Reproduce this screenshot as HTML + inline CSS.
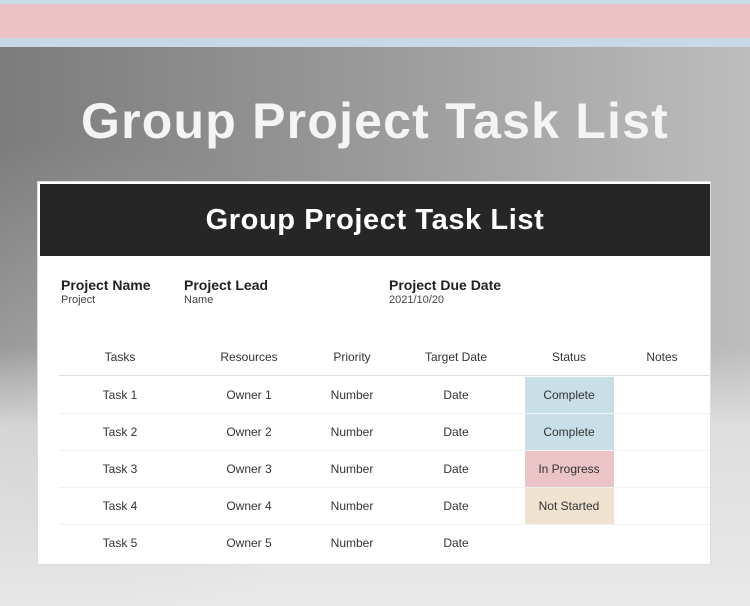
<!DOCTYPE html>
<html><head><style>
*{margin:0;padding:0;box-sizing:border-box}
html,body{width:750px;height:606px;overflow:hidden}
body{position:relative;font-family:"Liberation Sans",sans-serif;background:#e6e6e6}
.top{position:absolute;left:0;top:0;width:750px;height:47px;background:#c5dde6}
.pink{position:absolute;left:0;top:4px;width:750px;height:34px;background:#ebc3c6}
.band2{position:absolute;left:0;top:38px;width:750px;height:9px;background:#c8d8e6}
.bg{position:absolute;left:0;top:47px;width:750px;height:559px;background:linear-gradient(180deg,rgba(0,0,0,0) 0,rgba(0,0,0,0) 300px,#dedede 380px,#e9e9e9 100%),linear-gradient(90deg,#7c7c7c,#9a9a9a 50%,#bdbdbd);overflow:hidden}
.wave{position:absolute;left:-300px;top:90px;width:700px;height:500px;border-radius:50%;background:radial-gradient(ellipse at center,rgba(200,200,200,.5),rgba(170,170,170,0) 70%)}
h1{position:absolute;left:0;width:750px;top:92px;text-align:center;color:#f4f4f4;font-size:50px;font-weight:bold;font-family:"Liberation Sans",sans-serif;letter-spacing:1.2px}
.card{position:absolute;left:37px;top:181px;width:674px;height:384px;background:#fff;border:1px solid #ddd}
.hd{position:absolute;left:2px;top:2px;width:670px;height:72px;background:#262626;color:#fff;font-size:29px;font-weight:bold;text-align:center;line-height:72px;letter-spacing:0.6px}
.lab{position:absolute;font-size:14px;font-weight:bold;color:#222}
.val{position:absolute;font-size:11px;color:#444}
.c{position:absolute;font-size:12px;color:#333;text-align:center;width:100px;margin-left:-50px}
.st{position:absolute;left:487px;width:89px;height:36px}
</style></head><body>
<div class="top"></div><div class="pink"></div><div class="band2"></div>
<div class="bg"><div class="wave"></div></div>
<h1>Group Project Task List</h1>
<div class="card">
<div class="hd">Group Project Task List</div>
<div class="lab" style="left:23px;top:95px">Project Name</div>
<div class="val" style="left:23px;top:112px">Project</div>
<div class="lab" style="left:146px;top:95px">Project Lead</div>
<div class="val" style="left:146px;top:112px">Name</div>
<div class="lab" style="left:351px;top:95px">Project Due Date</div>
<div class="val" style="left:351px;top:112px">2021/10/20</div>
<div style="position:absolute;left:21px;top:193px;width:651px;height:1px;background:#ddd"></div>
<div class="st" style="top:195px;background:#c9dfe8"></div>
<div class="st" style="top:232px;background:#c9dfe8"></div>
<div class="st" style="top:269px;background:#ebc4c8"></div>
<div class="st" style="top:306px;background:#efe2cf"></div>
<div style="position:absolute;left:21px;top:231px;width:651px;height:1px;background:#f2f2f2"></div>
<div style="position:absolute;left:21px;top:268px;width:651px;height:1px;background:#f2f2f2"></div>
<div style="position:absolute;left:21px;top:305px;width:651px;height:1px;background:#f2f2f2"></div>
<div style="position:absolute;left:21px;top:342px;width:651px;height:1px;background:#f2f2f2"></div>
<div class="c" style="left:82px;top:168px">Tasks</div>
<div class="c" style="left:211px;top:168px">Resources</div>
<div class="c" style="left:314px;top:168px">Priority</div>
<div class="c" style="left:418px;top:168px">Target Date</div>
<div class="c" style="left:531px;top:168px">Status</div>
<div class="c" style="left:624px;top:168px">Notes</div>

<div class="c" style="left:82px;top:206px">Task 1</div><div class="c" style="left:211px;top:206px">Owner 1</div><div class="c" style="left:314px;top:206px">Number</div><div class="c" style="left:418px;top:206px">Date</div><div class="c" style="left:531px;top:206px">Complete</div>
<div class="c" style="left:82px;top:243px">Task 2</div><div class="c" style="left:211px;top:243px">Owner 2</div><div class="c" style="left:314px;top:243px">Number</div><div class="c" style="left:418px;top:243px">Date</div><div class="c" style="left:531px;top:243px">Complete</div>
<div class="c" style="left:82px;top:280px">Task 3</div><div class="c" style="left:211px;top:280px">Owner 3</div><div class="c" style="left:314px;top:280px">Number</div><div class="c" style="left:418px;top:280px">Date</div><div class="c" style="left:531px;top:280px">In Progress</div>
<div class="c" style="left:82px;top:317px">Task 4</div><div class="c" style="left:211px;top:317px">Owner 4</div><div class="c" style="left:314px;top:317px">Number</div><div class="c" style="left:418px;top:317px">Date</div><div class="c" style="left:531px;top:317px">Not Started</div>
<div class="c" style="left:82px;top:354px">Task 5</div><div class="c" style="left:211px;top:354px">Owner 5</div><div class="c" style="left:314px;top:354px">Number</div><div class="c" style="left:418px;top:354px">Date</div>
</div>
</body></html>
